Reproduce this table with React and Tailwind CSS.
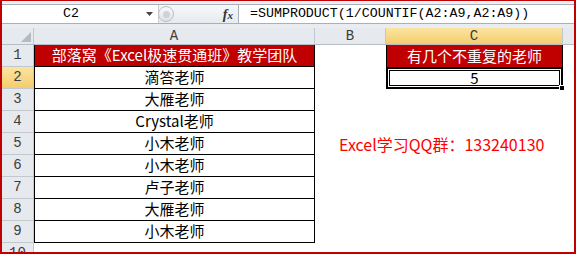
import React from 'react'

const teachers = ['滴答老师', '大雁老师', 'Crystal老师', '小木老师', '小木老师', '卢子老师', '大雁老师', '小木老师']

const cjk = { fontFamily: '"Noto Sans CJK SC", "Noto Sans", sans-serif' }
const mono = { fontFamily: '"Liberation Mono", "DejaVu Sans Mono", monospace' }

function RowHead({ n, active, h = 'h-[22px]' }) {
  return (
    <div
      className={`w-[32px] ${h} shrink-0 flex items-center justify-center border-b border-r border-[#c3c8cf] text-[14px] text-[#3c3c3c] ${
        active ? 'bg-gradient-to-b from-[#fbe4a0] to-[#f5cc6c]' : 'bg-[#e6e9ed]'
      }`}
      style={mono}
    >
      {n}
    </div>
  )
}

export default function App() {
  return (
    <div className="w-[576px] h-[254px] overflow-hidden bg-white border-l-2 border-r-2 border-b-2 border-t border-[#c00000] flex flex-col">
      <div className="h-[3px] bg-[#eef0f3] shrink-0" />

      {/* formula bar */}
      <div className="h-[20px] shrink-0 flex border-t border-b border-[#a9b0b9] bg-white">
        <div className="w-[138px] flex items-center justify-center text-[13.3px] text-black" style={mono}>
          C2
        </div>
        <div className="w-[18px] flex items-center justify-center">
          <svg width="7" height="4" viewBox="0 0 7 4">
            <path d="M0 0h7L3.5 4z" fill="#444" />
          </svg>
        </div>
        <div className="w-[80px] flex items-center bg-gradient-to-b from-[#f7f8fa] to-[#e7eaee] border-l border-[#c9ced5]">
          <div className="w-[16px] h-[16px] -ml-[1px] rounded-full border border-[#b9bec6] bg-gradient-to-b from-[#fafafa] to-[#dfe2e6] flex items-center justify-center">
            <div className="w-[7px] h-[7px] rounded-full bg-[#cfd3d9]" />
          </div>
          <div className="flex-1" />
          <span className="pr-[5px] text-[14px] italic font-bold text-[#333]" style={{ fontFamily: '"Liberation Serif", serif' }}>
            f<span className="text-[11px]">x</span>
          </span>
        </div>
        <div
          className="flex-1 flex items-center pl-[11px] border-l border-[#a9b0b9] text-[13.3px] text-black whitespace-nowrap"
          style={mono}
        >
          =SUMPRODUCT(1/COUNTIF(A2:A9,A2:A9))
        </div>
      </div>

      <div className="h-[4px] shrink-0 bg-[#e9ecf0]" />

      {/* column headers */}
      <div className="h-[17px] shrink-0 flex text-[14px] text-[#3c3c3c] border-b border-[#b7bdc5]" style={mono}>
        <div className="w-[32px] bg-[#e6e9ed] border-r border-[#c3c8cf] flex items-end justify-end p-[2px]">
          <svg width="10" height="10" viewBox="0 0 10 10">
            <path d="M10 0v10H0z" fill="#b5bac1" />
          </svg>
        </div>
        <div className="w-[281px] bg-[#e6e9ed] border-r border-[#c3c8cf] flex items-center justify-center">A</div>
        <div className="w-[71px] bg-[#e6e9ed] border-r border-[#c3c8cf] flex items-center justify-center">B</div>
        <div className="w-[177px] bg-gradient-to-b from-[#fbe4a0] to-[#f5cc6c] border-r border-[#c3c8cf] flex items-center justify-center">C</div>
        <div className="flex-1 bg-[#e6e9ed]" />
      </div>

      {/* row 1 */}
      <div className="h-[22px] shrink-0 flex text-[15px]" style={cjk}>
        <RowHead n={1} />
        <div className="w-[281px] bg-[#c00000] text-white border-l border-r border-b border-black flex items-center justify-center whitespace-nowrap">
          部落窝《Excel极速贯通班》教学团队
        </div>
        <div className="w-[71px]" />
        <div className="w-[177px] bg-[#c00000] text-white border-l border-r border-black flex items-center justify-center whitespace-nowrap">
          有几个不重复的老师
        </div>
        <div className="flex-1" />
      </div>

      {teachers.map((t, i) => (
        <div key={i} className="h-[22px] shrink-0 flex text-[15px] text-black" style={cjk}>
          <RowHead n={i + 2} active={i === 0} />
          <div className="w-[281px] border-l border-r border-b border-black flex items-center justify-center whitespace-nowrap">
            {t}
          </div>
          <div className="w-[71px] relative">
            {i === 3 && (
              <span className="absolute left-[24px] top-0 h-full flex items-center whitespace-nowrap text-[16px] text-[#ff0000]">
                Excel学习QQ群：133240130
              </span>
            )}
          </div>
          {i === 0 ? (
            <div className="w-[177px] relative border-2 border-black flex items-center justify-center">
              <div className="absolute inset-0 border border-white" />
              <div className="absolute inset-[1px] border border-black" />
              <span className="relative">5</span>
              <div className="absolute -right-[4px] -bottom-[4px] w-[6px] h-[6px] bg-black border border-white" />
            </div>
          ) : (
            <div className="w-[177px]" />
          )}
          <div className="flex-1" />
        </div>
      ))}

      <div className="h-[22px] shrink-0 flex">
        <RowHead n={10} />
        <div className="flex-1" />
      </div>
    </div>
  )
}
